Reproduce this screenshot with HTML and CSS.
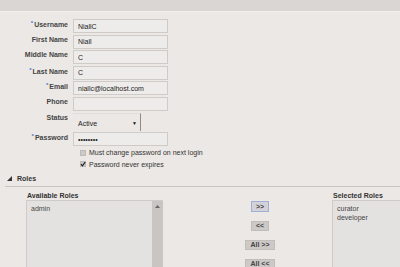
FILE: index.html
```html
<!DOCTYPE html>
<html lang="en">
<head>
    <meta charset="UTF-8">
    <title>Edit User</title>
    <link rel="stylesheet" href="styles.css">
</head>
<body>
    <div class="topbar"></div>
    <div class="user-form">
        <label class="lbl"><span class="req">*</span>Username</label>
        <input class="field" type="text" value="NiallC">
        <label class="lbl">First Name</label>
        <input class="field" type="text" value="Niall">
        <label class="lbl">Middle Name</label>
        <input class="field" type="text" value="C">
        <label class="lbl"><span class="req">*</span>Last Name</label>
        <input class="field" type="text" value="C">
        <label class="lbl"><span class="req">*</span>Email</label>
        <input class="field" type="text" value="niallc@localhost.com">
        <label class="lbl">Phone</label>
        <input class="field" type="text" value="">
        <label class="lbl">Status</label>
        <div class="status-select">
            <span>Active</span>
            <span class="arrow">&#9660;</span>
        </div>
        <label class="lbl"><span class="req">*</span>Password</label>
        <input class="field" type="password" value="password">
        <div class="check-row">
            <span class="check"></span>
            <span>Must change password on next login</span>
        </div>
        <div class="check-row">
            <span class="check">
                <svg width="6" height="6" viewBox="0 0 6 6"><path d="M1 3.2 L2.4 4.8 L5.2 1.2" fill="none" stroke="#222" stroke-width="1.2"/></svg>
            </span>
            <span>Password never expires</span>
        </div>
    </div>

    <div class="section-head">
        <svg class="toggle" width="5" height="5" viewBox="0 0 5 5"><polygon points="5,0 5,5 0,5" fill="#333"/></svg>
        <span>Roles</span>
    </div>

    <div class="roles">
        <div class="role-col available">
            <div class="role-title">Available Roles</div>
            <div class="role-list">
                <div class="role-items">
                    <div>admin</div>
                </div>
                <div class="scroll">
                    <svg width="5" height="3" viewBox="0 0 5 3"><polygon points="2.5,0 5,3 0,3" fill="#666"/></svg>
                </div>
            </div>
        </div>
        <div class="mover">
            <button class="move-btn focused">&gt;&gt;</button>
            <button class="move-btn">&lt;&lt;</button>
            <button class="move-btn">All &gt;&gt;</button>
            <button class="move-btn">All &lt;&lt;</button>
        </div>
        <div class="role-col selected">
            <div class="role-title">Selected Roles</div>
            <div class="role-list">
                <div class="role-items">
                    <div>curator</div>
                    <div>developer</div>
                </div>
            </div>
        </div>
    </div>
</body>
</html>
```

FILE: styles.css
```css
html, body {
    margin: 0;
    height: 267px;
    overflow: hidden;
}
body {
    background-color: #ebe8e5;
    font-family: "Liberation Sans", Arial, sans-serif;
    font-size: 7px;
    line-height: 9px;
    color: #333;
}
.topbar {
    height: 11px;
    background: #dad6d3;
    border-bottom: 1px solid #f2f0ee;
}
.user-form {
    display: grid;
    grid-template-columns: 68px 95px;
    column-gap: 5px;
    row-gap: 1.6px;
    margin-top: 7px;
}
.lbl {
    font-weight: bold;
    color: #444;
    text-align: right;
    align-self: start;
}
.req {
    color: #4a78c8;
    font-size: 6px;
    vertical-align: 2px;
    margin-right: 1px;
}
.field {
    box-sizing: border-box;
    height: 14px;
    width: 95px;
    margin: 0;
    padding: 0 4px;
    border: 1px solid #cfcbc7;
    background: #eeecea;
    font-family: "Liberation Sans", Arial, sans-serif;
    font-size: 7px;
    color: #222;
    outline: none;
}
.status-select {
    box-sizing: border-box;
    width: 68px;
    height: 18px;
    border-top: 1px solid #e0ddda;
    border-right: 1px solid #8e8b88;
    display: flex;
    align-items: center;
    justify-content: space-between;
    padding: 2px 3px 0 5px;
    color: #222;
}
.status-select .arrow {
    font-size: 5px;
    color: #111;
}
.check-row {
    grid-column: 2 / 3;
    height: 10px;
    display: flex;
    align-items: center;
    gap: 3px;
    padding-left: 7px;
    color: #333;
    white-space: nowrap;
}
.check {
    flex: none;
    width: 6px;
    height: 6px;
    background: #cdc9c6;
    border: 1px solid #bdb9b6;
    box-sizing: border-box;
    display: flex;
    align-items: center;
    justify-content: center;
}
.check svg {
    flex: none;
}
.section-head {
    display: flex;
    align-items: center;
    gap: 5px;
    margin: 5px 0 0 5px;
    padding: 0 0 3px 2px;
    border-bottom: 1px solid #c9c5c2;
    font-weight: bold;
    color: #333;
}
.roles {
    display: flex;
    padding-left: 26px;
    margin-top: 4px;
}
.role-col {
    flex: none;
    display: flex;
    flex-direction: column;
}
.available {
    width: 137px;
}
.selected {
    width: 68px;
}
.role-title {
    font-weight: bold;
    color: #333;
    padding-left: 1px;
    white-space: nowrap;
}
.role-list {
    display: flex;
    height: 68px;
    background: #e4e2e0;
    border-top: 1px solid #cfcbc8;
    border-left: 1px solid #cfcbc8;
}
.role-items {
    flex: 1;
    padding: 3px 4px;
    color: #444;
}
.scroll {
    width: 11px;
    background: #c9c5c2;
    display: flex;
    justify-content: center;
    padding-top: 4px;
    box-sizing: border-box;
}
.mover {
    flex: none;
    width: 144px;
    padding-left: 25px;
    padding-top: 10px;
    display: flex;
    flex-direction: column;
    align-items: center;
    gap: 9px;
}
.move-btn {
    height: 10px;
    padding: 0 4px;
    margin: 0;
    background: #ccc9c6;
    border: 1px solid #c0bdba;
    font-family: "Liberation Sans", Arial, sans-serif;
    font-size: 7px;
    font-weight: bold;
    line-height: 8px;
    color: #444;
}
.move-btn.focused {
    height: 11px;
    border-color: #9fb0d6;
    background: #d4d2d8;
}
```
